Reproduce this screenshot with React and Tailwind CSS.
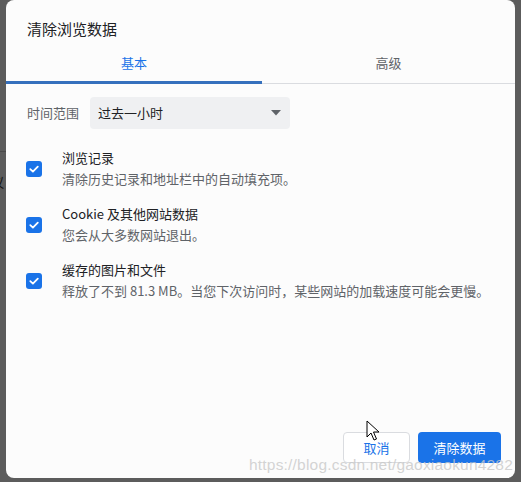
import React from 'react';

const items = [
  { title: '浏览记录', desc: '清除历史记录和地址栏中的自动填充项。' },
  { title: 'Cookie 及其他网站数据', desc: '您会从大多数网站退出。' },
  { title: '缓存的图片和文件', desc: '释放了不到 81.3 MB。当您下次访问时，某些网站的加载速度可能会更慢。' },
];

function Checkbox() {
  return (
    <div className="w-4 h-4 rounded-[3px] bg-[#1a73e8] flex items-center justify-center shrink-0">
      <svg width="12" height="12" viewBox="0 0 12 12">
        <path d="M2.3 6.2 L4.9 8.6 L9.8 3.6" fill="none" stroke="#fff" strokeWidth="1.8" strokeLinecap="round" strokeLinejoin="round" />
      </svg>
    </div>
  );
}

export default function App() {
  return (
    <div
      className="relative w-[521px] h-[482px] bg-[#5c5c5c] overflow-hidden flex"
      style={{ fontFamily: '"Noto Sans CJK SC", "Noto Sans", sans-serif' }}
    >
      {/* page strip peeking out on the left */}
      <div className="w-[6px] shrink-0 flex flex-col">
        <div className="h-[152px] border-b border-[#4a4a4a]" />
        <div className="relative h-[40px] overflow-hidden">
          <span className="absolute left-[-9px] top-[20px] text-[13px] text-[#111]">议</span>
        </div>
      </div>

      <div className="w-[509px] h-[478px] bg-[#fcfcfc] rounded-lg flex flex-col">
        <div className="pt-[19px] pl-[21px] text-[15px] leading-5 text-[#202124]">清除浏览数据</div>

        <div className="flex mt-[5px] h-[40px] border-b border-[#dadce0]">
          <div className="w-[256px] flex items-center justify-center text-[13px] text-[#1a73e8] border-b-[3px] border-[#3570bd] mb-[-1px] pt-[1px]">基本</div>
          <div className="flex-1 flex items-center justify-center text-[13px] text-[#5f6368] pb-[1px]">高级</div>
        </div>

        <div className="flex items-center mt-[13px] pl-[21px] h-[32px]">
          <span className="text-[13px] text-[#5f6368] w-[63px]">时间范围</span>
          <div className="w-[200px] h-[32px] rounded bg-[#eff0f2] flex items-center justify-between pl-[8px] pr-[9px] text-[13px] text-[#202124]">
            <span>过去一小时</span>
            <svg width="10" height="6" viewBox="0 0 10 6"><path d="M0 0 H10 L5 5.5 Z" fill="#5f6368" /></svg>
          </div>
        </div>

        <div className="flex flex-col gap-[15px] mt-[19px]">
          {items.map((it) => (
            <div key={it.title} className="flex items-center pl-[20px]">
              <Checkbox />
              <div className="ml-[20px] flex flex-col text-[13px] leading-5">
                <span className="text-[#202124]">{it.title}</span>
                <span className="text-[#5f6368] mt-px">{it.desc}</span>
              </div>
            </div>
          ))}
        </div>

        <div className="mt-auto flex justify-end gap-2 pr-[14px] pb-[15px]">
          <button className="w-[67px] h-[31px] rounded border border-[#dadce0] bg-white text-[13px] text-[#1a73e8]">取消</button>
          <button className="w-[83px] h-[31px] rounded bg-[#1a73e8] text-[13px] text-white">清除数据</button>
        </div>
      </div>

      {/* watermark */}
      <div
        className="absolute left-[249px] top-[453px] text-[15.5px] text-[#c8c8c8]/80 tracking-[0.2px]"
        style={{ fontFamily: '"Liberation Sans", Arial, sans-serif' }}
      >
        https://blog.csdn.net/gaoxiaokun4282
      </div>

      {/* mouse cursor */}
      <svg className="absolute left-[366px] top-[420px]" width="14" height="22" viewBox="0 0 14 22">
        <path d="M1 1 L1 17 L5 13 L8 20 L10.5 19 L7.5 12 L13 12 Z" fill="#fff" stroke="#000" strokeWidth="1" strokeLinejoin="round" />
      </svg>
    </div>
  );
}
